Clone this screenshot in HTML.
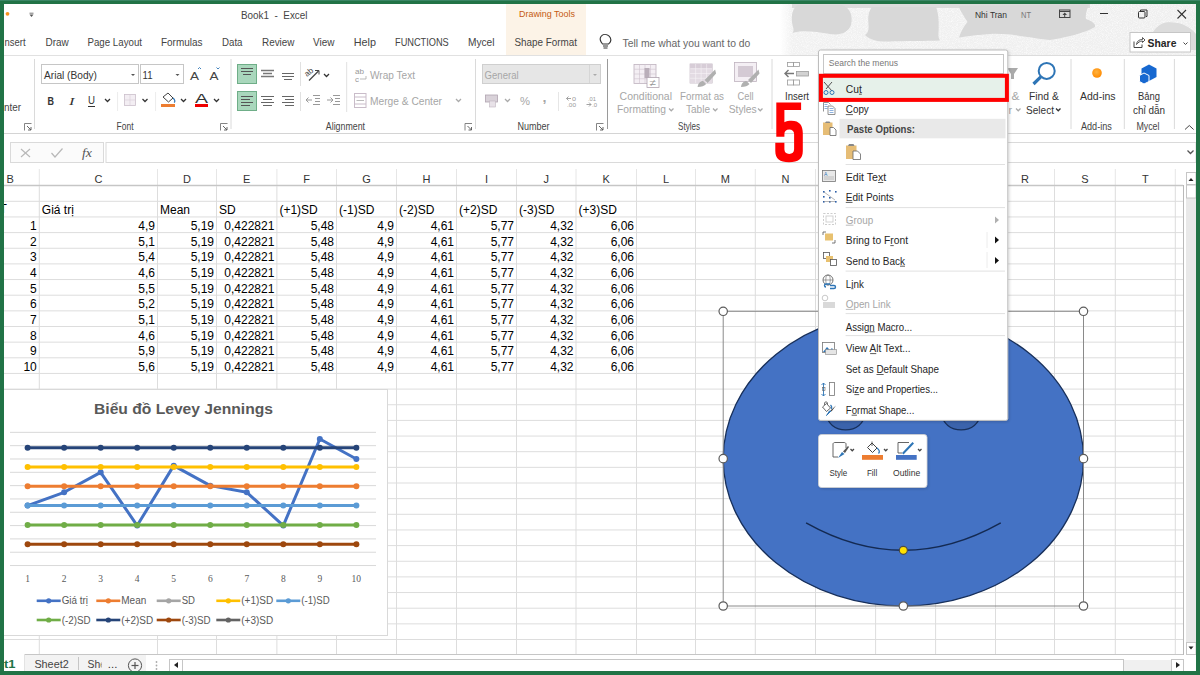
<!DOCTYPE html>
<html><head><meta charset="utf-8"><style>
html,body{margin:0;padding:0;background:#fff;overflow:hidden;width:1200px;height:675px}
svg{display:block;font-family:"Liberation Sans",sans-serif}
</style></head><body>
<svg width="1200" height="675" viewBox="0 0 1200 675">
<rect x="0" y="0" width="1200" height="675" fill="#ffffff"/>
<defs><filter id="noise" x="0" y="0" width="100%" height="100%"><feTurbulence type="fractalNoise" baseFrequency="1.2" numOctaves="1" seed="5" result="t"/><feColorMatrix in="t" values="0 0 0 0 1  0 0 0 0 1  0 0 0 0 1  0 0 0 -2.2 1.25"/></filter><filter id="sh" x="-10%" y="-10%" width="130%" height="130%"><feGaussianBlur in="SourceAlpha" stdDeviation="1.5"/><feOffset dx="0.5" dy="1"/><feComponentTransfer><feFuncA type="linear" slope="0.18"/></feComponentTransfer><feMerge><feMergeNode/><feMergeNode in="SourceGraphic"/></feMerge></filter></defs>
<defs><linearGradient id="bandg" x1="0" y1="0" x2="1" y2="0"><stop offset="0" stop-color="#fff"/><stop offset="0.03" stop-color="#f1f1f1"/><stop offset="1" stop-color="#efefef"/></linearGradient><filter id="soft"><feGaussianBlur stdDeviation="0.7"/></filter></defs>
<rect x="780" y="4" width="416" height="51" fill="url(#bandg)"/>
<rect x="780" y="4" width="416" height="51" fill="#fff" filter="url(#noise)" opacity="0.9"/>
<g filter="url(#soft)">
<rect x="792" y="4" width="298" height="4" fill="#dcdcdc"/>
<path d="M792.5,33 C800,30 815,31 830,34 C840,35.5 848,33 851,25 C853,17 851,8 842,5 L798,5 C793,8 791,14 792,22 C792.5,27 795,30 792.5,33 Z" fill="#d8d8d8"/>
<path d="M865,35 C868,33 869,30 868.5,24 C868,18 868,12 872,7 L936,7 C939,14 939,25 938.5,33 C938,38 940,40 940,40.5 C925,41 905,41 890,41.5 C878,42 870,40 865,35 Z" fill="#d8d8d8"/>
<path d="M959,37.5 C961,31 964,26 967.5,21.9 C964,16 960,11 958.8,6 L1088.8,4.4 C1087,10 1085,15 1086,19 C1092,21 1096,24 1095,27 C1088,31 1075,36 1050,40 C1030,38 1010,33 990,34 C978,35 968,36 959,37.5 Z" fill="#d8d8d8"/>
<path d="M1149,50 C1148,36 1156,24 1166,22.5 C1178,21 1190,26 1196,34 L1196,50 Z" fill="#dcdcdc"/>
</g>
<circle cx="7.5" cy="13.8" r="1.9" fill="#f7931e"/>
<line x1="29.5" y1="13.2" x2="33.5" y2="13.2" stroke="#555" stroke-width="0.8"/>
<path d="M29.5,14.6 L33.5,14.6 L31.5,17 Z" fill="#555"/>
<text x="241" y="19" font-size="10.5" fill="#444" textLength="66.5" lengthAdjust="spacingAndGlyphs">Book1  -  Excel</text>
<rect x="506" y="4" width="80" height="51" fill="#fcf3e7"/>
<text x="519" y="16.5" font-size="9" fill="#c55a11" textLength="56" lengthAdjust="spacingAndGlyphs">Drawing Tools</text>
<text x="975" y="18" font-size="9" fill="#333" textLength="32" lengthAdjust="spacingAndGlyphs">Nhi Tran</text>
<text x="1021" y="18" font-size="9" fill="#777" textLength="10" lengthAdjust="spacingAndGlyphs">NT</text>
<rect x="1059.5" y="10" width="10.5" height="7.5" fill="none" stroke="#444" stroke-width="1"/>
<line x1="1059.5" y1="11.5" x2="1070" y2="11.5" stroke="#444" stroke-width="1"/>
<path d="M1064.7,12.5 L1062.5,15 L1067,15 Z" fill="#444"/>
<line x1="1064.7" y1="14" x2="1064.7" y2="17.5" stroke="#444" stroke-width="1"/>
<line x1="1100" y1="13.5" x2="1108" y2="13.5" stroke="#333" stroke-width="1"/>
<rect x="1138.5" y="11.5" width="6.5" height="6.5" fill="none" stroke="#333" stroke-width="1" rx="1"/>
<path d="M1140.5,11 L1140.5,10 L1147,10 L1147,16.5 L1146,16.5" fill="none" stroke="#333" stroke-width="1"/>
<line x1="1177.5" y1="10" x2="1186" y2="18.5" stroke="#333" stroke-width="1.1"/>
<line x1="1186" y1="10" x2="1177.5" y2="18.5" stroke="#333" stroke-width="1.1"/>
<text x="4.5" y="46.3" font-size="10.5" fill="#444" textLength="21.0" lengthAdjust="spacingAndGlyphs">nsert</text>
<text x="45.5" y="46.3" font-size="10.5" fill="#444" textLength="23.25" lengthAdjust="spacingAndGlyphs">Draw</text>
<text x="87.5" y="46.3" font-size="10.5" fill="#444" textLength="54.5" lengthAdjust="spacingAndGlyphs">Page Layout</text>
<text x="161" y="46.3" font-size="10.5" fill="#444" textLength="41.5" lengthAdjust="spacingAndGlyphs">Formulas</text>
<text x="222" y="46.3" font-size="10.5" fill="#444" textLength="20.5" lengthAdjust="spacingAndGlyphs">Data</text>
<text x="262" y="46.3" font-size="10.5" fill="#444" textLength="32.5" lengthAdjust="spacingAndGlyphs">Review</text>
<text x="313" y="46.3" font-size="10.5" fill="#444" textLength="21.5" lengthAdjust="spacingAndGlyphs">View</text>
<text x="353.75" y="46.3" font-size="10.5" fill="#444" textLength="22.25" lengthAdjust="spacingAndGlyphs">Help</text>
<text x="395" y="46.3" font-size="10.5" fill="#444" textLength="53.75" lengthAdjust="spacingAndGlyphs">FUNCTIONS</text>
<text x="468" y="46.3" font-size="10.5" fill="#444" textLength="26.5" lengthAdjust="spacingAndGlyphs">Mycel</text>
<text x="514.5" y="46.3" font-size="10.5" fill="#444" textLength="62.5" lengthAdjust="spacingAndGlyphs">Shape Format</text>
<path d="M602.5,44 C600,41 599.5,38.5 601,36.5 C602.5,34.5 605.5,34 607.5,35 C610,36 611.5,39 610.5,41.5 C610,42.8 609,43.5 608.5,44 Z" fill="none" stroke="#333" stroke-width="1.1"/>
<line x1="603" y1="46" x2="608" y2="46" stroke="#333" stroke-width="1"/>
<line x1="603.5" y1="48" x2="607.5" y2="48" stroke="#333" stroke-width="1"/>
<text x="622.6" y="46.8" font-size="10.5" fill="#666" textLength="127.7" lengthAdjust="spacingAndGlyphs">Tell me what you want to do</text>
<rect x="1130" y="32.5" width="60.5" height="19.5" fill="#fff" stroke="#c6c6c6" stroke-width="1"/>
<path d="M1134,41.5 L1134,47.5 L1142,47.5 L1142,44.5" fill="none" stroke="#444" stroke-width="1"/>
<path d="M1136.5,44.5 C1137,41 1139,39.5 1142.5,39.5 L1142.5,37.5 L1145,40 L1142.5,42.5 L1142.5,41 C1140,41 1138,42.5 1136.5,44.5 Z" fill="none" stroke="#444" stroke-width="0.9"/>
<text x="1147.6" y="47" font-size="11" fill="#262626" font-weight="bold" textLength="28.8" lengthAdjust="spacingAndGlyphs">Share</text>
<path d="M1183.5,42.5 L1185.5,44.5 L1187.5,42.5" fill="none" stroke="#444" stroke-width="1"/>
<line x1="4" y1="55.5" x2="790" y2="55.5" stroke="#e1e1e1" stroke-width="1"/>
<line x1="790" y1="55.5" x2="1196" y2="55.5" stroke="#dcdcdc" stroke-width="1"/>
<line x1="4" y1="133.5" x2="1196" y2="133.5" stroke="#d4d4d4" stroke-width="1"/>
<text x="4" y="111" font-size="10.5" fill="#444" textLength="17" lengthAdjust="spacingAndGlyphs">nter</text>
<path d="M24.5,130.5 L24.5,123.5 L31.5,123.5" fill="none" stroke="#777" stroke-width="0.9"/>
<path d="M27.0,126.0 L31.0,130.0 M31.0,127.0 L31.0,130.0 L28.0,130.0" fill="none" stroke="#555" stroke-width="0.9"/>
<line x1="34.5" y1="59" x2="34.5" y2="129" stroke="#dadada" stroke-width="1"/>
<rect x="41.5" y="64.5" width="97" height="19" fill="#fff" stroke="#c6c6c6" stroke-width="1"/>
<text x="44" y="78.5" font-size="10.5" fill="#333" textLength="53" lengthAdjust="spacingAndGlyphs">Arial (Body)</text>
<path d="M131,74 L133,76 L135,74 Z" fill="#555"/>
<rect x="140.5" y="64.5" width="43" height="19" fill="#fff" stroke="#c6c6c6" stroke-width="1"/>
<text x="142.5" y="78.5" font-size="10.5" fill="#333" textLength="10" lengthAdjust="spacingAndGlyphs">11</text>
<path d="M175.5,74 L177.5,76 L179.5,74 Z" fill="#555"/>
<text x="190" y="80" font-size="11" fill="#444" textLength="9" lengthAdjust="spacingAndGlyphs">A</text>
<path d="M198,69 L199.5,67.5 L201,69" fill="none" stroke="#2e75b6" stroke-width="0.9"/>
<text x="209.5" y="80" font-size="11" fill="#444" textLength="9" lengthAdjust="spacingAndGlyphs">A</text>
<path d="M216.5,67.5 L218,69 L219.5,67.5" fill="none" stroke="#2e75b6" stroke-width="0.9"/>
<text x="47.5" y="105" font-size="11" fill="#333" font-weight="bold" textLength="6.5" lengthAdjust="spacingAndGlyphs">B</text>
<text x="69" y="105" font-size="11" fill="#333" font-family="Liberation Serif" font-style="italic" textLength="5.5" lengthAdjust="spacingAndGlyphs">I</text>
<text x="88" y="104" font-size="10.5" fill="#333" textLength="7" lengthAdjust="spacingAndGlyphs">U</text>
<line x1="88" y1="106.5" x2="95" y2="106.5" stroke="#333" stroke-width="1"/>
<path d="M105,99 L107.5,101.5 L110,99" fill="none" stroke="#333" stroke-width="1.25"/>
<line x1="117.6" y1="92" x2="117.6" y2="111" stroke="#ececec" stroke-width="1"/>
<rect x="124.5" y="94.5" width="11" height="11" fill="#f3eef3" stroke="#cbbfcb" stroke-width="0.8"/>
<line x1="130" y1="94.5" x2="130" y2="105.5" stroke="#d8cfd8" stroke-width="0.6"/>
<line x1="124.5" y1="100" x2="135.5" y2="100" stroke="#d8cfd8" stroke-width="0.6"/>
<path d="M142.5,99 L145.0,101.5 L147.5,99" fill="none" stroke="#333" stroke-width="1.25"/>
<line x1="155.6" y1="92" x2="155.6" y2="111" stroke="#ececec" stroke-width="1"/>
<path d="M163,97 L168,93 L173,98 L168.5,102 Z" fill="none" stroke="#444" stroke-width="1"/>
<path d="M173,98 C175,100 175.5,101.5 174,102.5" fill="none" stroke="#2e75b6" stroke-width="1.2"/>
<rect x="161" y="104" width="14" height="3" fill="#ed7d31"/>
<path d="M181,99 L183.5,101.5 L186,99" fill="none" stroke="#333" stroke-width="1.25"/>
<text x="195" y="103" font-size="12" fill="#333" textLength="13" lengthAdjust="spacingAndGlyphs">A</text>
<rect x="195" y="104" width="13" height="3" fill="#f00000"/>
<path d="M214,99 L216.5,101.5 L219,99" fill="none" stroke="#333" stroke-width="1.25"/>
<text x="116.6" y="130" font-size="10.5" fill="#444" textLength="17" lengthAdjust="spacingAndGlyphs">Font</text>
<path d="M220.5,130.5 L220.5,123.5 L227.5,123.5" fill="none" stroke="#777" stroke-width="0.9"/>
<path d="M223.0,126.0 L227.0,130.0 M227.0,127.0 L227.0,130.0 L224.0,130.0" fill="none" stroke="#555" stroke-width="0.9"/>
<line x1="231" y1="59" x2="231" y2="129" stroke="#dadada" stroke-width="1"/>
<rect x="237.5" y="64.5" width="19" height="19" fill="#a9d7bc" stroke="#6fae88" stroke-width="1"/>
<line x1="241" y1="68.5" x2="253" y2="68.5" stroke="#555" stroke-width="1"/>
<line x1="241" y1="71.5" x2="253" y2="71.5" stroke="#555" stroke-width="1"/>
<line x1="243" y1="74.5" x2="251" y2="74.5" stroke="#555" stroke-width="1"/>
<line x1="261" y1="70.5" x2="274" y2="70.5" stroke="#777" stroke-width="1.5"/>
<line x1="263" y1="73.5" x2="272" y2="73.5" stroke="#777" stroke-width="1.5"/>
<line x1="261" y1="76.5" x2="274" y2="76.5" stroke="#777" stroke-width="1.5"/>
<line x1="282" y1="73.5" x2="294" y2="73.5" stroke="#666" stroke-width="1"/>
<line x1="282" y1="76.5" x2="294" y2="76.5" stroke="#666" stroke-width="1"/>
<line x1="284" y1="79.5" x2="292" y2="79.5" stroke="#666" stroke-width="1"/>
<line x1="300.5" y1="62" x2="300.5" y2="86" stroke="#e1e1e1" stroke-width="1"/>
<text x="0" y="0" font-size="8" fill="#444" transform="translate(307,77) rotate(-40)">ab</text>
<line x1="309" y1="80.5" x2="318.5" y2="71" stroke="#444" stroke-width="1.2"/>
<path d="M315,70.5 L319,70.5 L319,74.5" fill="none" stroke="#444" stroke-width="1"/>
<path d="M324,74 L326.5,76.5 L329,74" fill="none" stroke="#333" stroke-width="1.25"/>
<line x1="346.7" y1="62" x2="346.7" y2="112" stroke="#e1e1e1" stroke-width="1"/>
<text x="355" y="74" font-size="7" fill="#999" textLength="9" lengthAdjust="spacingAndGlyphs">ab</text>
<text x="355" y="82" font-size="7" fill="#999" textLength="4" lengthAdjust="spacingAndGlyphs">c</text>
<path d="M360,79 L366,79 L366,76" fill="none" stroke="#aaa" stroke-width="0.8"/>
<text x="370" y="78.8" font-size="10.5" fill="#a6a6a6" textLength="45" lengthAdjust="spacingAndGlyphs">Wrap Text</text>
<rect x="237.5" y="91.5" width="19" height="19" fill="#a9d7bc" stroke="#6fae88" stroke-width="1"/>
<line x1="241" y1="96.5" x2="253" y2="96.5" stroke="#555" stroke-width="1"/>
<line x1="241" y1="99.5" x2="250" y2="99.5" stroke="#555" stroke-width="1"/>
<line x1="241" y1="102.5" x2="253" y2="102.5" stroke="#555" stroke-width="1"/>
<line x1="241" y1="105.5" x2="250" y2="105.5" stroke="#555" stroke-width="1"/>
<line x1="261" y1="96.5" x2="274" y2="96.5" stroke="#666" stroke-width="1"/>
<line x1="263" y1="99.5" x2="272" y2="99.5" stroke="#666" stroke-width="1"/>
<line x1="261" y1="102.5" x2="274" y2="102.5" stroke="#666" stroke-width="1"/>
<line x1="263" y1="105.5" x2="272" y2="105.5" stroke="#666" stroke-width="1"/>
<line x1="282" y1="96.5" x2="294" y2="96.5" stroke="#666" stroke-width="1"/>
<line x1="285" y1="99.5" x2="294" y2="99.5" stroke="#666" stroke-width="1"/>
<line x1="282" y1="102.5" x2="294" y2="102.5" stroke="#666" stroke-width="1"/>
<line x1="285" y1="105.5" x2="294" y2="105.5" stroke="#666" stroke-width="1"/>
<line x1="300.5" y1="92" x2="300.5" y2="111" stroke="#e1e1e1" stroke-width="1"/>
<line x1="313" y1="95.5" x2="320" y2="95.5" stroke="#999" stroke-width="1"/>
<line x1="315" y1="98.5" x2="320" y2="98.5" stroke="#999" stroke-width="1"/>
<line x1="315" y1="101.5" x2="320" y2="101.5" stroke="#999" stroke-width="1"/>
<line x1="313" y1="104.5" x2="320" y2="104.5" stroke="#999" stroke-width="1"/>
<path d="M306,100 L312,100 M308.5,97.5 L306,100 L308.5,102.5" fill="none" stroke="#999" stroke-width="1"/>
<line x1="333" y1="95.5" x2="340" y2="95.5" stroke="#999" stroke-width="1"/>
<line x1="335" y1="98.5" x2="340" y2="98.5" stroke="#999" stroke-width="1"/>
<line x1="335" y1="101.5" x2="340" y2="101.5" stroke="#999" stroke-width="1"/>
<line x1="333" y1="104.5" x2="340" y2="104.5" stroke="#999" stroke-width="1"/>
<path d="M327,100 L333,100 M330.5,97.5 L333,100 L330.5,102.5" fill="none" stroke="#999" stroke-width="1"/>
<rect x="354.5" y="93.5" width="11.5" height="14" fill="none" stroke="#c9bcc9" stroke-width="1"/>
<line x1="354.5" y1="97" x2="366" y2="97" stroke="#c9bcc9" stroke-width="1"/>
<line x1="354.5" y1="104" x2="366" y2="104" stroke="#c9bcc9" stroke-width="1"/>
<path d="M356.5,100.5 L364,100.5" fill="none" stroke="#aaa" stroke-width="0.8"/>
<text x="370" y="104.8" font-size="10.5" fill="#a6a6a6" textLength="72" lengthAdjust="spacingAndGlyphs">Merge &amp; Center</text>
<path d="M456,99 L458.5,101.5 L461,99" fill="none" stroke="#aaa" stroke-width="1.25"/>
<text x="325.8" y="130" font-size="10.5" fill="#444" textLength="39.2" lengthAdjust="spacingAndGlyphs">Alignment</text>
<path d="M465,130.5 L465,123.5 L472,123.5" fill="none" stroke="#777" stroke-width="0.9"/>
<path d="M467.5,126.0 L471.5,130.0 M471.5,127.0 L471.5,130.0 L468.5,130.0" fill="none" stroke="#555" stroke-width="0.9"/>
<line x1="475.5" y1="59" x2="475.5" y2="129" stroke="#dadada" stroke-width="1"/>
<rect x="482.5" y="64.5" width="118" height="19" fill="#e6e6e6" stroke="#cfcfcf" stroke-width="1"/>
<line x1="589.5" y1="65" x2="589.5" y2="83" stroke="#d6d6d6" stroke-width="1"/>
<text x="484.6" y="78.5" font-size="10.5" fill="#a6a6a6" textLength="34" lengthAdjust="spacingAndGlyphs">General</text>
<path d="M593,74 L595,76 L597,74 Z" fill="#aaa"/>
<rect x="485.5" y="95" width="12" height="7" fill="#d9d2d9" stroke="#b0a4b0" stroke-width="0.8"/>
<rect x="489.5" y="101" width="6" height="6" fill="#e8e2e8" stroke="#c0b6c0" stroke-width="0.6"/>
<path d="M505,99 L507.5,101.5 L510,99" fill="none" stroke="#aaa" stroke-width="1.25"/>
<text x="520" y="105" font-size="11" fill="#a6a6a6" textLength="10" lengthAdjust="spacingAndGlyphs">%</text>
<text x="542.5" y="101.5" font-size="13" fill="#a6a6a6" font-weight="bold" textLength="4" lengthAdjust="spacingAndGlyphs">,</text>
<line x1="558.5" y1="92" x2="558.5" y2="111" stroke="#e6e6e6" stroke-width="1"/>
<path d="M566.5,98.5 L571,98.5 M568.5,96.5 L566.5,98.5 L568.5,100.5" fill="none" stroke="#999" stroke-width="0.9"/>
<text x="572" y="101" font-size="6" fill="#999" textLength="4" lengthAdjust="spacingAndGlyphs">0</text>
<text x="567" y="107" font-size="6" fill="#999" textLength="9" lengthAdjust="spacingAndGlyphs">.00</text>
<text x="588" y="101" font-size="6" fill="#999" textLength="8" lengthAdjust="spacingAndGlyphs">.01</text>
<path d="M586.5,104.5 L591,104.5 M589,102.5 L591,104.5 L589,106.5" fill="none" stroke="#999" stroke-width="0.9"/>
<text x="592" y="107" font-size="6" fill="#999" textLength="5" lengthAdjust="spacingAndGlyphs">.0</text>
<text x="517.5" y="130" font-size="10.5" fill="#444" textLength="32.1" lengthAdjust="spacingAndGlyphs">Number</text>
<path d="M596.5,130.5 L596.5,123.5 L603.5,123.5" fill="none" stroke="#777" stroke-width="0.9"/>
<path d="M599.0,126.0 L603.0,130.0 M603.0,127.0 L603.0,130.0 L600.0,130.0" fill="none" stroke="#555" stroke-width="0.9"/>
<line x1="607.5" y1="59" x2="607.5" y2="129" stroke="#9a9a9a" stroke-width="1"/>
<rect x="634.0" y="64.5" width="22" height="19" fill="#f4eff4" stroke="#bfb2bf" stroke-width="0.8"/>
<line x1="634.0" y1="69.25" x2="656.0" y2="69.25" stroke="#cfc3cf" stroke-width="0.6"/>
<line x1="634.0" y1="74.0" x2="656.0" y2="74.0" stroke="#cfc3cf" stroke-width="0.6"/>
<line x1="634.0" y1="78.75" x2="656.0" y2="78.75" stroke="#cfc3cf" stroke-width="0.6"/>
<line x1="639.5" y1="64.5" x2="639.5" y2="83.5" stroke="#cfc3cf" stroke-width="0.6"/>
<line x1="645.0" y1="64.5" x2="645.0" y2="83.5" stroke="#cfc3cf" stroke-width="0.6"/>
<line x1="650.5" y1="64.5" x2="650.5" y2="83.5" stroke="#cfc3cf" stroke-width="0.6"/>
<rect x="644.5" y="68" width="5" height="10" fill="#b9aeb9"/>
<rect x="647.0" y="77.5" width="12" height="10" fill="#fff" stroke="#b0a4b0" stroke-width="0.8"/>
<text x="649.8" y="86.2" font-size="9" fill="#999" textLength="6.5" lengthAdjust="spacingAndGlyphs">≠</text>
<text x="619.6" y="100.3" font-size="10.5" fill="#a6a6a6" textLength="52.4" lengthAdjust="spacingAndGlyphs">Conditional</text>
<text x="617" y="113.2" font-size="10.5" fill="#a6a6a6" textLength="49" lengthAdjust="spacingAndGlyphs">Formatting</text>
<path d="M669,108.5 L671.25,110.75 L673.5,108.5" fill="none" stroke="#aaa" stroke-width="1.25"/>
<rect x="690.1" y="64.0" width="22" height="19" fill="#f4eff4" stroke="#bfb2bf" stroke-width="0.8"/>
<rect x="690.1" y="64.0" width="22" height="4.5" fill="#d7cdd7"/>
<line x1="690.1" y1="68.75" x2="712.1" y2="68.75" stroke="#cfc3cf" stroke-width="0.6"/>
<line x1="690.1" y1="73.5" x2="712.1" y2="73.5" stroke="#cfc3cf" stroke-width="0.6"/>
<line x1="690.1" y1="78.25" x2="712.1" y2="78.25" stroke="#cfc3cf" stroke-width="0.6"/>
<line x1="695.6" y1="64.0" x2="695.6" y2="83.0" stroke="#cfc3cf" stroke-width="0.6"/>
<line x1="701.1" y1="64.0" x2="701.1" y2="83.0" stroke="#cfc3cf" stroke-width="0.6"/>
<line x1="706.6" y1="64.0" x2="706.6" y2="83.0" stroke="#cfc3cf" stroke-width="0.6"/>
<rect x="690.1" y="68.5" width="22" height="14.5" fill="#e3dbe3"/>
<line x1="690.1" y1="68.75" x2="712.1" y2="68.75" stroke="#f7f3f7" stroke-width="0.6"/>
<line x1="690.1" y1="73.5" x2="712.1" y2="73.5" stroke="#f7f3f7" stroke-width="0.6"/>
<line x1="690.1" y1="78.25" x2="712.1" y2="78.25" stroke="#f7f3f7" stroke-width="0.6"/>
<line x1="695.6" y1="64.0" x2="695.6" y2="83.0" stroke="#f7f3f7" stroke-width="0.6"/>
<line x1="701.1" y1="64.0" x2="701.1" y2="83.0" stroke="#f7f3f7" stroke-width="0.6"/>
<line x1="706.6" y1="64.0" x2="706.6" y2="83.0" stroke="#f7f3f7" stroke-width="0.6"/>
<path d="M697.6,87.0 C698.1,83.5 700.1,81.0 703.1,81.0 L706.1,84.0 C704.6,86.0 701.6,87.0 697.6,87.0 Z M704.6,80.0 L715.1,69.5 L716.1,73.5 L707.6,83.0 Z" fill="#b0b0b0"/>
<text x="680" y="99.8" font-size="10.5" fill="#a6a6a6" textLength="44" lengthAdjust="spacingAndGlyphs">Format as</text>
<text x="686" y="113" font-size="10.5" fill="#a6a6a6" textLength="24" lengthAdjust="spacingAndGlyphs">Table</text>
<path d="M713,108.5 L715.25,110.75 L717.5,108.5" fill="none" stroke="#aaa" stroke-width="1.25"/>
<rect x="734.5" y="62.5" width="22" height="19" fill="#f4eff4" stroke="#bfb2bf" stroke-width="0.8"/>
<rect x="738" y="66" width="15" height="11" fill="#d4cad4"/>
<path d="M741,87 C741.5,83.5 743.5,81 746.5,81 L749.5,84 C748,86 745,87 741,87 Z M748,80 L758.5,69.5 L759.5,73.5 L751,83 Z" fill="#b0b0b0"/>
<text x="737.6" y="99.8" font-size="10.5" fill="#a6a6a6" textLength="16" lengthAdjust="spacingAndGlyphs">Cell</text>
<text x="728.7" y="113" font-size="10.5" fill="#a6a6a6" textLength="28" lengthAdjust="spacingAndGlyphs">Styles</text>
<path d="M758,108.5 L760.25,110.75 L762.5,108.5" fill="none" stroke="#aaa" stroke-width="1.25"/>
<text x="678" y="130" font-size="10.5" fill="#444" textLength="22" lengthAdjust="spacingAndGlyphs">Styles</text>
<line x1="772" y1="59" x2="772" y2="129" stroke="#dadada" stroke-width="1"/>
<rect x="787.5" y="62.5" width="6" height="4" fill="none" stroke="#9c9c9c" stroke-width="0.8"/>
<rect x="793.5" y="62.5" width="6" height="4" fill="none" stroke="#9c9c9c" stroke-width="0.8"/>
<rect x="796.5" y="71.5" width="12" height="4.5" fill="#d2d2d2" stroke="#9c9c9c" stroke-width="0.8"/>
<path d="M785,73.5 L794,73.5 M788.5,70 L785,73.5 L788.5,77" fill="none" stroke="#777" stroke-width="1.4"/>
<rect x="787.5" y="80" width="6" height="5" fill="none" stroke="#9c9c9c" stroke-width="0.8"/>
<rect x="793.5" y="80" width="6" height="5" fill="none" stroke="#9c9c9c" stroke-width="0.8"/>
<text x="785" y="99.8" font-size="10.5" fill="#333" textLength="24" lengthAdjust="spacingAndGlyphs">Insert</text>
<path d="M1007,68 L1018,68 L1014,74 L1014,79 L1011,79 L1011,74 Z" fill="#aaa"/>
<text x="1011.5" y="100" font-size="10.5" fill="#a6a6a6" textLength="8" lengthAdjust="spacingAndGlyphs">&amp;</text>
<text x="1008.6" y="114" font-size="10.5" fill="#a6a6a6" textLength="3.6" lengthAdjust="spacingAndGlyphs">r</text>
<path d="M1016,108.5 L1018.25,110.75 L1020.5,108.5" fill="none" stroke="#aaa" stroke-width="1.25"/>
<circle cx="1046.7" cy="70.9" r="8" fill="none" stroke="#2e75b6" stroke-width="2"/>
<line x1="1040.8" y1="76.8" x2="1033.5" y2="84" stroke="#2e75b6" stroke-width="3.2"/>
<text x="1029" y="100" font-size="10.5" fill="#333" textLength="29.8" lengthAdjust="spacingAndGlyphs">Find &amp;</text>
<text x="1026" y="114" font-size="10.5" fill="#333" textLength="28" lengthAdjust="spacingAndGlyphs">Select</text>
<path d="M1056,108.5 L1058.25,110.75 L1060.5,108.5" fill="none" stroke="#333" stroke-width="1.25"/>
<line x1="1071" y1="59" x2="1071" y2="129" stroke="#dadada" stroke-width="1"/>
<defs><radialGradient id="og" cx="0.45" cy="0.4" r="0.6"><stop offset="0" stop-color="#ffb340"/><stop offset="1" stop-color="#ff8a00"/></radialGradient></defs>
<circle cx="1097" cy="73" r="4.8" fill="url(#og)"/>
<text x="1080" y="100" font-size="10.5" fill="#333" textLength="35.6" lengthAdjust="spacingAndGlyphs">Add-ins</text>
<text x="1081" y="130" font-size="10.5" fill="#444" textLength="30.8" lengthAdjust="spacingAndGlyphs">Add-ins</text>
<line x1="1124.3" y1="59" x2="1124.3" y2="129" stroke="#dadada" stroke-width="1"/>
<path d="M1149,64.5 L1156.5,68.5 L1156.5,77 L1149,81 L1141.5,77 L1141.5,68.5 Z" fill="#1768d0"/>
<path d="M1144,73 L1149,75.5 L1149,81.5 L1144,84 L1139.5,81.5 L1139.5,75.5 Z" fill="#1768d0" stroke="#fff" stroke-width="1"/>
<text x="1138" y="100" font-size="10.5" fill="#333" textLength="22" lengthAdjust="spacingAndGlyphs">Bảng</text>
<text x="1133" y="114" font-size="10.5" fill="#333" textLength="32" lengthAdjust="spacingAndGlyphs">chỉ dẫn</text>
<text x="1136.4" y="130" font-size="10.5" fill="#444" textLength="23.1" lengthAdjust="spacingAndGlyphs">Mycel</text>
<line x1="1174.4" y1="59" x2="1174.4" y2="129" stroke="#dadada" stroke-width="1"/>
<path d="M1185,129.5 L1189.3,125.5 L1193.6,129.5" fill="none" stroke="#444" stroke-width="1"/>
<rect x="10.5" y="142.5" width="93" height="20" fill="#fbfbfb" stroke="#dadada" stroke-width="1"/>
<line x1="21" y1="149" x2="30" y2="157" stroke="#b8b8b8" stroke-width="1.2"/>
<line x1="30" y1="149" x2="21" y2="157" stroke="#b8b8b8" stroke-width="1.2"/>
<path d="M51.5,153 L55,157 L62.5,148.5" fill="none" stroke="#b8b8b8" stroke-width="1.2"/>
<text x="82" y="157" font-size="12" fill="#555" font-family="Liberation Serif" font-style="italic" textLength="10" lengthAdjust="spacingAndGlyphs">fx</text>
<rect x="106" y="142.5" width="1090" height="20" fill="#fff" stroke="#dadada" stroke-width="1"/>
<path d="M1187.5,150.5 L1190.5,153.5 L1193.5,150.5" fill="none" stroke="#555" stroke-width="1.3"/>
<line x1="39.3" y1="169" x2="39.3" y2="185" stroke="#e6e6e6" stroke-width="1"/>
<line x1="157.5" y1="169" x2="157.5" y2="185" stroke="#e6e6e6" stroke-width="1"/>
<line x1="216.5" y1="169" x2="216.5" y2="185" stroke="#e6e6e6" stroke-width="1"/>
<line x1="276.9" y1="169" x2="276.9" y2="185" stroke="#e6e6e6" stroke-width="1"/>
<line x1="336.5" y1="169" x2="336.5" y2="185" stroke="#e6e6e6" stroke-width="1"/>
<line x1="396.5" y1="169" x2="396.5" y2="185" stroke="#e6e6e6" stroke-width="1"/>
<line x1="456.5" y1="169" x2="456.5" y2="185" stroke="#e6e6e6" stroke-width="1"/>
<line x1="516.5" y1="169" x2="516.5" y2="185" stroke="#e6e6e6" stroke-width="1"/>
<line x1="576" y1="169" x2="576" y2="185" stroke="#e6e6e6" stroke-width="1"/>
<line x1="636.5" y1="169" x2="636.5" y2="185" stroke="#e6e6e6" stroke-width="1"/>
<line x1="695.5" y1="169" x2="695.5" y2="185" stroke="#e6e6e6" stroke-width="1"/>
<line x1="755.3" y1="169" x2="755.3" y2="185" stroke="#e6e6e6" stroke-width="1"/>
<line x1="815.5" y1="169" x2="815.5" y2="185" stroke="#e6e6e6" stroke-width="1"/>
<line x1="875.6" y1="169" x2="875.6" y2="185" stroke="#e6e6e6" stroke-width="1"/>
<line x1="935.6" y1="169" x2="935.6" y2="185" stroke="#e6e6e6" stroke-width="1"/>
<line x1="995.5" y1="169" x2="995.5" y2="185" stroke="#e6e6e6" stroke-width="1"/>
<line x1="1054.5" y1="169" x2="1054.5" y2="185" stroke="#e6e6e6" stroke-width="1"/>
<line x1="1115.3" y1="169" x2="1115.3" y2="185" stroke="#e6e6e6" stroke-width="1"/>
<line x1="1175.3" y1="169" x2="1175.3" y2="185" stroke="#e6e6e6" stroke-width="1"/>
<line x1="4" y1="185.5" x2="1183" y2="185.5" stroke="#c6c6c6" stroke-width="1.5"/>
<text x="6.5" y="182.5" font-size="11" fill="#333">B</text>
<text x="98.4" y="182.5" font-size="11" fill="#333" text-anchor="middle">C</text>
<text x="187.0" y="182.5" font-size="11" fill="#333" text-anchor="middle">D</text>
<text x="246.7" y="182.5" font-size="11" fill="#333" text-anchor="middle">E</text>
<text x="306.7" y="182.5" font-size="11" fill="#333" text-anchor="middle">F</text>
<text x="366.5" y="182.5" font-size="11" fill="#333" text-anchor="middle">G</text>
<text x="426.5" y="182.5" font-size="11" fill="#333" text-anchor="middle">H</text>
<text x="486.5" y="182.5" font-size="11" fill="#333" text-anchor="middle">I</text>
<text x="546.25" y="182.5" font-size="11" fill="#333" text-anchor="middle">J</text>
<text x="606.25" y="182.5" font-size="11" fill="#333" text-anchor="middle">K</text>
<text x="666.0" y="182.5" font-size="11" fill="#333" text-anchor="middle">L</text>
<text x="725.4" y="182.5" font-size="11" fill="#333" text-anchor="middle">M</text>
<text x="785.4" y="182.5" font-size="11" fill="#333" text-anchor="middle">N</text>
<text x="845.55" y="182.5" font-size="11" fill="#333" text-anchor="middle">O</text>
<text x="905.6" y="182.5" font-size="11" fill="#333" text-anchor="middle">P</text>
<text x="965.55" y="182.5" font-size="11" fill="#333" text-anchor="middle">Q</text>
<text x="1025.0" y="182.5" font-size="11" fill="#333" text-anchor="middle">R</text>
<text x="1084.9" y="182.5" font-size="11" fill="#333" text-anchor="middle">S</text>
<text x="1145.3" y="182.5" font-size="11" fill="#333" text-anchor="middle">T</text>
<path d="M4,201.30H1183 M4,216.95H1183 M4,232.60H1183 M4,248.25H1183 M4,263.90H1183 M4,279.55H1183 M4,295.20H1183 M4,310.85H1183 M4,326.50H1183 M4,342.15H1183 M4,357.80H1183 M4,373.45H1183 M4,389.10H1183 M4,404.75H1183 M4,420.40H1183 M4,436.05H1183 M4,451.70H1183 M4,467.35H1183 M4,483.00H1183 M4,498.65H1183 M4,514.30H1183 M4,529.95H1183 M4,545.60H1183 M4,561.25H1183 M4,576.90H1183 M4,592.55H1183 M4,608.20H1183 M4,623.85H1183 M4,639.50H1183 M39.30,186V654 M157.50,186V654 M216.50,186V654 M276.90,186V654 M336.50,186V654 M396.50,186V654 M456.50,186V654 M516.50,186V654 M576.00,186V654 M636.50,186V654 M695.50,186V654 M755.30,186V654 M815.50,186V654 M875.60,186V654 M935.60,186V654 M995.50,186V654 M1054.50,186V654 M1115.30,186V654 M1175.30,186V654" fill="none" stroke="#dddddd" stroke-width="1"/>
<line x1="1183.5" y1="185" x2="1183.5" y2="655" stroke="#b9b9b9" stroke-width="1"/>
<line x1="4" y1="654.5" x2="1183" y2="654.5" stroke="#c6c6c6" stroke-width="1"/>
<text x="6.8" y="213.3" font-size="12" fill="#000" text-anchor="end">STT</text>
<text x="41.8" y="213.55" font-size="12" fill="#000">Giá trị</text>
<text x="160.0" y="213.55" font-size="12" fill="#000">Mean</text>
<text x="219.0" y="213.55" font-size="12" fill="#000">SD</text>
<text x="279.4" y="213.55" font-size="12" fill="#000">(+1)SD</text>
<text x="339.0" y="213.55" font-size="12" fill="#000">(-1)SD</text>
<text x="399.0" y="213.55" font-size="12" fill="#000">(-2)SD</text>
<text x="459.0" y="213.55" font-size="12" fill="#000">(+2)SD</text>
<text x="519.0" y="213.55" font-size="12" fill="#000">(-3)SD</text>
<text x="578.5" y="213.55" font-size="12" fill="#000">(+3)SD</text>
<text x="36.8" y="230.0" font-size="12" fill="#000" text-anchor="end">1</text>
<text x="155.0" y="230.0" font-size="12" fill="#000" text-anchor="end">4,9</text>
<text x="214.0" y="230.0" font-size="12" fill="#000" text-anchor="end">5,19</text>
<text x="274.4" y="230.0" font-size="12" fill="#000" text-anchor="end">0,422821</text>
<text x="334.0" y="230.0" font-size="12" fill="#000" text-anchor="end">5,48</text>
<text x="394.0" y="230.0" font-size="12" fill="#000" text-anchor="end">4,9</text>
<text x="454.0" y="230.0" font-size="12" fill="#000" text-anchor="end">4,61</text>
<text x="514.0" y="230.0" font-size="12" fill="#000" text-anchor="end">5,77</text>
<text x="573.5" y="230.0" font-size="12" fill="#000" text-anchor="end">4,32</text>
<text x="634.0" y="230.0" font-size="12" fill="#000" text-anchor="end">6,06</text>
<text x="36.8" y="245.65" font-size="12" fill="#000" text-anchor="end">2</text>
<text x="155.0" y="245.65" font-size="12" fill="#000" text-anchor="end">5,1</text>
<text x="214.0" y="245.65" font-size="12" fill="#000" text-anchor="end">5,19</text>
<text x="274.4" y="245.65" font-size="12" fill="#000" text-anchor="end">0,422821</text>
<text x="334.0" y="245.65" font-size="12" fill="#000" text-anchor="end">5,48</text>
<text x="394.0" y="245.65" font-size="12" fill="#000" text-anchor="end">4,9</text>
<text x="454.0" y="245.65" font-size="12" fill="#000" text-anchor="end">4,61</text>
<text x="514.0" y="245.65" font-size="12" fill="#000" text-anchor="end">5,77</text>
<text x="573.5" y="245.65" font-size="12" fill="#000" text-anchor="end">4,32</text>
<text x="634.0" y="245.65" font-size="12" fill="#000" text-anchor="end">6,06</text>
<text x="36.8" y="261.3" font-size="12" fill="#000" text-anchor="end">3</text>
<text x="155.0" y="261.3" font-size="12" fill="#000" text-anchor="end">5,4</text>
<text x="214.0" y="261.3" font-size="12" fill="#000" text-anchor="end">5,19</text>
<text x="274.4" y="261.3" font-size="12" fill="#000" text-anchor="end">0,422821</text>
<text x="334.0" y="261.3" font-size="12" fill="#000" text-anchor="end">5,48</text>
<text x="394.0" y="261.3" font-size="12" fill="#000" text-anchor="end">4,9</text>
<text x="454.0" y="261.3" font-size="12" fill="#000" text-anchor="end">4,61</text>
<text x="514.0" y="261.3" font-size="12" fill="#000" text-anchor="end">5,77</text>
<text x="573.5" y="261.3" font-size="12" fill="#000" text-anchor="end">4,32</text>
<text x="634.0" y="261.3" font-size="12" fill="#000" text-anchor="end">6,06</text>
<text x="36.8" y="276.95" font-size="12" fill="#000" text-anchor="end">4</text>
<text x="155.0" y="276.95" font-size="12" fill="#000" text-anchor="end">4,6</text>
<text x="214.0" y="276.95" font-size="12" fill="#000" text-anchor="end">5,19</text>
<text x="274.4" y="276.95" font-size="12" fill="#000" text-anchor="end">0,422821</text>
<text x="334.0" y="276.95" font-size="12" fill="#000" text-anchor="end">5,48</text>
<text x="394.0" y="276.95" font-size="12" fill="#000" text-anchor="end">4,9</text>
<text x="454.0" y="276.95" font-size="12" fill="#000" text-anchor="end">4,61</text>
<text x="514.0" y="276.95" font-size="12" fill="#000" text-anchor="end">5,77</text>
<text x="573.5" y="276.95" font-size="12" fill="#000" text-anchor="end">4,32</text>
<text x="634.0" y="276.95" font-size="12" fill="#000" text-anchor="end">6,06</text>
<text x="36.8" y="292.6" font-size="12" fill="#000" text-anchor="end">5</text>
<text x="155.0" y="292.6" font-size="12" fill="#000" text-anchor="end">5,5</text>
<text x="214.0" y="292.6" font-size="12" fill="#000" text-anchor="end">5,19</text>
<text x="274.4" y="292.6" font-size="12" fill="#000" text-anchor="end">0,422821</text>
<text x="334.0" y="292.6" font-size="12" fill="#000" text-anchor="end">5,48</text>
<text x="394.0" y="292.6" font-size="12" fill="#000" text-anchor="end">4,9</text>
<text x="454.0" y="292.6" font-size="12" fill="#000" text-anchor="end">4,61</text>
<text x="514.0" y="292.6" font-size="12" fill="#000" text-anchor="end">5,77</text>
<text x="573.5" y="292.6" font-size="12" fill="#000" text-anchor="end">4,32</text>
<text x="634.0" y="292.6" font-size="12" fill="#000" text-anchor="end">6,06</text>
<text x="36.8" y="308.25" font-size="12" fill="#000" text-anchor="end">6</text>
<text x="155.0" y="308.25" font-size="12" fill="#000" text-anchor="end">5,2</text>
<text x="214.0" y="308.25" font-size="12" fill="#000" text-anchor="end">5,19</text>
<text x="274.4" y="308.25" font-size="12" fill="#000" text-anchor="end">0,422821</text>
<text x="334.0" y="308.25" font-size="12" fill="#000" text-anchor="end">5,48</text>
<text x="394.0" y="308.25" font-size="12" fill="#000" text-anchor="end">4,9</text>
<text x="454.0" y="308.25" font-size="12" fill="#000" text-anchor="end">4,61</text>
<text x="514.0" y="308.25" font-size="12" fill="#000" text-anchor="end">5,77</text>
<text x="573.5" y="308.25" font-size="12" fill="#000" text-anchor="end">4,32</text>
<text x="634.0" y="308.25" font-size="12" fill="#000" text-anchor="end">6,06</text>
<text x="36.8" y="323.9" font-size="12" fill="#000" text-anchor="end">7</text>
<text x="155.0" y="323.9" font-size="12" fill="#000" text-anchor="end">5,1</text>
<text x="214.0" y="323.9" font-size="12" fill="#000" text-anchor="end">5,19</text>
<text x="274.4" y="323.9" font-size="12" fill="#000" text-anchor="end">0,422821</text>
<text x="334.0" y="323.9" font-size="12" fill="#000" text-anchor="end">5,48</text>
<text x="394.0" y="323.9" font-size="12" fill="#000" text-anchor="end">4,9</text>
<text x="454.0" y="323.9" font-size="12" fill="#000" text-anchor="end">4,61</text>
<text x="514.0" y="323.9" font-size="12" fill="#000" text-anchor="end">5,77</text>
<text x="573.5" y="323.9" font-size="12" fill="#000" text-anchor="end">4,32</text>
<text x="634.0" y="323.9" font-size="12" fill="#000" text-anchor="end">6,06</text>
<text x="36.8" y="339.55" font-size="12" fill="#000" text-anchor="end">8</text>
<text x="155.0" y="339.55" font-size="12" fill="#000" text-anchor="end">4,6</text>
<text x="214.0" y="339.55" font-size="12" fill="#000" text-anchor="end">5,19</text>
<text x="274.4" y="339.55" font-size="12" fill="#000" text-anchor="end">0,422821</text>
<text x="334.0" y="339.55" font-size="12" fill="#000" text-anchor="end">5,48</text>
<text x="394.0" y="339.55" font-size="12" fill="#000" text-anchor="end">4,9</text>
<text x="454.0" y="339.55" font-size="12" fill="#000" text-anchor="end">4,61</text>
<text x="514.0" y="339.55" font-size="12" fill="#000" text-anchor="end">5,77</text>
<text x="573.5" y="339.55" font-size="12" fill="#000" text-anchor="end">4,32</text>
<text x="634.0" y="339.55" font-size="12" fill="#000" text-anchor="end">6,06</text>
<text x="36.8" y="355.2" font-size="12" fill="#000" text-anchor="end">9</text>
<text x="155.0" y="355.2" font-size="12" fill="#000" text-anchor="end">5,9</text>
<text x="214.0" y="355.2" font-size="12" fill="#000" text-anchor="end">5,19</text>
<text x="274.4" y="355.2" font-size="12" fill="#000" text-anchor="end">0,422821</text>
<text x="334.0" y="355.2" font-size="12" fill="#000" text-anchor="end">5,48</text>
<text x="394.0" y="355.2" font-size="12" fill="#000" text-anchor="end">4,9</text>
<text x="454.0" y="355.2" font-size="12" fill="#000" text-anchor="end">4,61</text>
<text x="514.0" y="355.2" font-size="12" fill="#000" text-anchor="end">5,77</text>
<text x="573.5" y="355.2" font-size="12" fill="#000" text-anchor="end">4,32</text>
<text x="634.0" y="355.2" font-size="12" fill="#000" text-anchor="end">6,06</text>
<text x="36.8" y="370.85" font-size="12" fill="#000" text-anchor="end">10</text>
<text x="155.0" y="370.85" font-size="12" fill="#000" text-anchor="end">5,6</text>
<text x="214.0" y="370.85" font-size="12" fill="#000" text-anchor="end">5,19</text>
<text x="274.4" y="370.85" font-size="12" fill="#000" text-anchor="end">0,422821</text>
<text x="334.0" y="370.85" font-size="12" fill="#000" text-anchor="end">5,48</text>
<text x="394.0" y="370.85" font-size="12" fill="#000" text-anchor="end">4,9</text>
<text x="454.0" y="370.85" font-size="12" fill="#000" text-anchor="end">4,61</text>
<text x="514.0" y="370.85" font-size="12" fill="#000" text-anchor="end">5,77</text>
<text x="573.5" y="370.85" font-size="12" fill="#000" text-anchor="end">4,32</text>
<text x="634.0" y="370.85" font-size="12" fill="#000" text-anchor="end">6,06</text>
<rect x="1186" y="185" width="10" height="469" fill="#e9e9e9"/>
<rect x="1186.5" y="172.5" width="9.5" height="12" fill="#fff" stroke="#c6c6c6" stroke-width="1"/>
<path d="M1188.5,181 L1191,178 L1193.5,181 Z" fill="#222"/>
<rect x="1186.5" y="185" width="9.5" height="13" fill="#fff" stroke="#c6c6c6" stroke-width="1"/>
<rect x="1186.5" y="642.5" width="9.5" height="12" fill="#fff" stroke="#c6c6c6" stroke-width="1"/>
<path d="M1188.5,646.5 L1191,649.5 L1193.5,646.5 Z" fill="#222"/>
<rect x="-1" y="389.5" width="388.5" height="246" fill="#fff" stroke="#d9d9d9" stroke-width="1"/>
<text x="94" y="414" font-size="14" fill="#595959" font-weight="bold" textLength="179" lengthAdjust="spacingAndGlyphs">Biểu đồ Levey Jennings</text>
<path d="M10,432.35H376 M10,445.67H376 M10,458.99H376 M10,472.31H376 M10,485.63H376 M10,498.95H376 M10,512.27H376 M10,525.59H376 M10,538.91H376 M10,552.23H376 M10,565.55H376" fill="none" stroke="#d9d9d9" stroke-width="1"/>
<polyline points="27.60,505.61 64.13,492.29 100.66,472.31 137.19,525.59 173.72,465.65 210.25,485.63 246.78,492.29 283.31,525.59 319.84,439.01 356.37,458.99" fill="none" stroke="#4472c4" stroke-width="3" stroke-linejoin="round"/>
<circle cx="27.6" cy="505.61" r="3" fill="#4472c4"/>
<circle cx="64.13" cy="492.29" r="3" fill="#4472c4"/>
<circle cx="100.66" cy="472.31" r="3" fill="#4472c4"/>
<circle cx="137.19" cy="525.59" r="3" fill="#4472c4"/>
<circle cx="173.72" cy="465.65" r="3" fill="#4472c4"/>
<circle cx="210.25" cy="485.63" r="3" fill="#4472c4"/>
<circle cx="246.78" cy="492.29" r="3" fill="#4472c4"/>
<circle cx="283.31" cy="525.59" r="3" fill="#4472c4"/>
<circle cx="319.84" cy="439.01" r="3" fill="#4472c4"/>
<circle cx="356.37" cy="458.99" r="3" fill="#4472c4"/>
<polyline points="27.60,486.30 64.13,486.30 100.66,486.30 137.19,486.30 173.72,486.30 210.25,486.30 246.78,486.30 283.31,486.30 319.84,486.30 356.37,486.30" fill="none" stroke="#ed7d31" stroke-width="3" stroke-linejoin="round"/>
<circle cx="27.6" cy="486.3" r="3" fill="#ed7d31"/>
<circle cx="64.13" cy="486.3" r="3" fill="#ed7d31"/>
<circle cx="100.66" cy="486.3" r="3" fill="#ed7d31"/>
<circle cx="137.19" cy="486.3" r="3" fill="#ed7d31"/>
<circle cx="173.72" cy="486.3" r="3" fill="#ed7d31"/>
<circle cx="210.25" cy="486.3" r="3" fill="#ed7d31"/>
<circle cx="246.78" cy="486.3" r="3" fill="#ed7d31"/>
<circle cx="283.31" cy="486.3" r="3" fill="#ed7d31"/>
<circle cx="319.84" cy="486.3" r="3" fill="#ed7d31"/>
<circle cx="356.37" cy="486.3" r="3" fill="#ed7d31"/>
<polyline points="27.60,466.99 64.13,466.99 100.66,466.99 137.19,466.99 173.72,466.99 210.25,466.99 246.78,466.99 283.31,466.99 319.84,466.99 356.37,466.99" fill="none" stroke="#ffc000" stroke-width="3" stroke-linejoin="round"/>
<circle cx="27.6" cy="466.99" r="3" fill="#ffc000"/>
<circle cx="64.13" cy="466.99" r="3" fill="#ffc000"/>
<circle cx="100.66" cy="466.99" r="3" fill="#ffc000"/>
<circle cx="137.19" cy="466.99" r="3" fill="#ffc000"/>
<circle cx="173.72" cy="466.99" r="3" fill="#ffc000"/>
<circle cx="210.25" cy="466.99" r="3" fill="#ffc000"/>
<circle cx="246.78" cy="466.99" r="3" fill="#ffc000"/>
<circle cx="283.31" cy="466.99" r="3" fill="#ffc000"/>
<circle cx="319.84" cy="466.99" r="3" fill="#ffc000"/>
<circle cx="356.37" cy="466.99" r="3" fill="#ffc000"/>
<polyline points="27.60,505.61 64.13,505.61 100.66,505.61 137.19,505.61 173.72,505.61 210.25,505.61 246.78,505.61 283.31,505.61 319.84,505.61 356.37,505.61" fill="none" stroke="#5b9bd5" stroke-width="3" stroke-linejoin="round"/>
<circle cx="27.6" cy="505.61" r="3" fill="#5b9bd5"/>
<circle cx="64.13" cy="505.61" r="3" fill="#5b9bd5"/>
<circle cx="100.66" cy="505.61" r="3" fill="#5b9bd5"/>
<circle cx="137.19" cy="505.61" r="3" fill="#5b9bd5"/>
<circle cx="173.72" cy="505.61" r="3" fill="#5b9bd5"/>
<circle cx="210.25" cy="505.61" r="3" fill="#5b9bd5"/>
<circle cx="246.78" cy="505.61" r="3" fill="#5b9bd5"/>
<circle cx="283.31" cy="505.61" r="3" fill="#5b9bd5"/>
<circle cx="319.84" cy="505.61" r="3" fill="#5b9bd5"/>
<circle cx="356.37" cy="505.61" r="3" fill="#5b9bd5"/>
<polyline points="27.60,524.93 64.13,524.93 100.66,524.93 137.19,524.93 173.72,524.93 210.25,524.93 246.78,524.93 283.31,524.93 319.84,524.93 356.37,524.93" fill="none" stroke="#70ad47" stroke-width="3" stroke-linejoin="round"/>
<circle cx="27.6" cy="524.93" r="3" fill="#70ad47"/>
<circle cx="64.13" cy="524.93" r="3" fill="#70ad47"/>
<circle cx="100.66" cy="524.93" r="3" fill="#70ad47"/>
<circle cx="137.19" cy="524.93" r="3" fill="#70ad47"/>
<circle cx="173.72" cy="524.93" r="3" fill="#70ad47"/>
<circle cx="210.25" cy="524.93" r="3" fill="#70ad47"/>
<circle cx="246.78" cy="524.93" r="3" fill="#70ad47"/>
<circle cx="283.31" cy="524.93" r="3" fill="#70ad47"/>
<circle cx="319.84" cy="524.93" r="3" fill="#70ad47"/>
<circle cx="356.37" cy="524.93" r="3" fill="#70ad47"/>
<polyline points="27.60,447.67 64.13,447.67 100.66,447.67 137.19,447.67 173.72,447.67 210.25,447.67 246.78,447.67 283.31,447.67 319.84,447.67 356.37,447.67" fill="none" stroke="#264478" stroke-width="3" stroke-linejoin="round"/>
<circle cx="27.6" cy="447.67" r="3" fill="#264478"/>
<circle cx="64.13" cy="447.67" r="3" fill="#264478"/>
<circle cx="100.66" cy="447.67" r="3" fill="#264478"/>
<circle cx="137.19" cy="447.67" r="3" fill="#264478"/>
<circle cx="173.72" cy="447.67" r="3" fill="#264478"/>
<circle cx="210.25" cy="447.67" r="3" fill="#264478"/>
<circle cx="246.78" cy="447.67" r="3" fill="#264478"/>
<circle cx="283.31" cy="447.67" r="3" fill="#264478"/>
<circle cx="319.84" cy="447.67" r="3" fill="#264478"/>
<circle cx="356.37" cy="447.67" r="3" fill="#264478"/>
<polyline points="27.60,544.24 64.13,544.24 100.66,544.24 137.19,544.24 173.72,544.24 210.25,544.24 246.78,544.24 283.31,544.24 319.84,544.24 356.37,544.24" fill="none" stroke="#9e480e" stroke-width="3" stroke-linejoin="round"/>
<circle cx="27.6" cy="544.24" r="3" fill="#9e480e"/>
<circle cx="64.13" cy="544.24" r="3" fill="#9e480e"/>
<circle cx="100.66" cy="544.24" r="3" fill="#9e480e"/>
<circle cx="137.19" cy="544.24" r="3" fill="#9e480e"/>
<circle cx="173.72" cy="544.24" r="3" fill="#9e480e"/>
<circle cx="210.25" cy="544.24" r="3" fill="#9e480e"/>
<circle cx="246.78" cy="544.24" r="3" fill="#9e480e"/>
<circle cx="283.31" cy="544.24" r="3" fill="#9e480e"/>
<circle cx="319.84" cy="544.24" r="3" fill="#9e480e"/>
<circle cx="356.37" cy="544.24" r="3" fill="#9e480e"/>
<text x="27.6" y="581.7" font-size="9.5" fill="#595959" font-family="Liberation Serif" text-anchor="middle">1</text>
<text x="64.13" y="581.7" font-size="9.5" fill="#595959" font-family="Liberation Serif" text-anchor="middle">2</text>
<text x="100.66" y="581.7" font-size="9.5" fill="#595959" font-family="Liberation Serif" text-anchor="middle">3</text>
<text x="137.19" y="581.7" font-size="9.5" fill="#595959" font-family="Liberation Serif" text-anchor="middle">4</text>
<text x="173.72" y="581.7" font-size="9.5" fill="#595959" font-family="Liberation Serif" text-anchor="middle">5</text>
<text x="210.25" y="581.7" font-size="9.5" fill="#595959" font-family="Liberation Serif" text-anchor="middle">6</text>
<text x="246.78" y="581.7" font-size="9.5" fill="#595959" font-family="Liberation Serif" text-anchor="middle">7</text>
<text x="283.31" y="581.7" font-size="9.5" fill="#595959" font-family="Liberation Serif" text-anchor="middle">8</text>
<text x="319.84" y="581.7" font-size="9.5" fill="#595959" font-family="Liberation Serif" text-anchor="middle">9</text>
<text x="356.37" y="581.7" font-size="9.5" fill="#595959" font-family="Liberation Serif" text-anchor="middle">10</text>
<line x1="36.7" y1="600.8" x2="60.7" y2="600.8" stroke="#4472c4" stroke-width="2.6"/>
<circle cx="48.7" cy="600.8" r="2.6" fill="#4472c4"/>
<text x="61.7" y="604.4" font-size="10" fill="#595959" textLength="26.3" lengthAdjust="spacingAndGlyphs">Giá trị</text>
<line x1="96.3" y1="600.8" x2="120.3" y2="600.8" stroke="#ed7d31" stroke-width="2.6"/>
<circle cx="108.3" cy="600.8" r="2.6" fill="#ed7d31"/>
<text x="121.3" y="604.4" font-size="10" fill="#595959" textLength="25" lengthAdjust="spacingAndGlyphs">Mean</text>
<line x1="156.7" y1="600.8" x2="180.7" y2="600.8" stroke="#a5a5a5" stroke-width="2.6"/>
<circle cx="168.7" cy="600.8" r="2.6" fill="#a5a5a5"/>
<text x="181.7" y="604.4" font-size="10" fill="#595959" textLength="13.3" lengthAdjust="spacingAndGlyphs">SD</text>
<line x1="216.3" y1="600.8" x2="240.3" y2="600.8" stroke="#ffc000" stroke-width="2.6"/>
<circle cx="228.3" cy="600.8" r="2.6" fill="#ffc000"/>
<text x="241.3" y="604.4" font-size="10" fill="#595959" textLength="31.9" lengthAdjust="spacingAndGlyphs">(+1)SD</text>
<line x1="276.3" y1="600.8" x2="300.3" y2="600.8" stroke="#5b9bd5" stroke-width="2.6"/>
<circle cx="288.3" cy="600.8" r="2.6" fill="#5b9bd5"/>
<text x="301.3" y="604.4" font-size="10" fill="#595959" textLength="28.3" lengthAdjust="spacingAndGlyphs">(-1)SD</text>
<line x1="36.7" y1="620" x2="60.7" y2="620" stroke="#70ad47" stroke-width="2.6"/>
<circle cx="48.7" cy="620" r="2.6" fill="#70ad47"/>
<text x="61.7" y="623.6" font-size="10" fill="#595959" textLength="28.8" lengthAdjust="spacingAndGlyphs">(-2)SD</text>
<line x1="96.3" y1="620" x2="120.3" y2="620" stroke="#264478" stroke-width="2.6"/>
<circle cx="108.3" cy="620" r="2.6" fill="#264478"/>
<text x="121.3" y="623.6" font-size="10" fill="#595959" textLength="31.8" lengthAdjust="spacingAndGlyphs">(+2)SD</text>
<line x1="156.7" y1="620" x2="180.7" y2="620" stroke="#9e480e" stroke-width="2.6"/>
<circle cx="168.7" cy="620" r="2.6" fill="#9e480e"/>
<text x="181.7" y="623.6" font-size="10" fill="#595959" textLength="28.8" lengthAdjust="spacingAndGlyphs">(-3)SD</text>
<line x1="216.3" y1="620" x2="240.3" y2="620" stroke="#636363" stroke-width="2.6"/>
<circle cx="228.3" cy="620" r="2.6" fill="#636363"/>
<text x="241.3" y="623.6" font-size="10" fill="#595959" textLength="31.9" lengthAdjust="spacingAndGlyphs">(+3)SD</text>
<rect x="4" y="655" width="1192" height="16" fill="#fff"/>
<rect x="24.5" y="654.5" width="122" height="17" fill="#f3f3f3" stroke="#c6c6c6" stroke-width="1"/>
<rect x="4" y="654" width="20.5" height="17" fill="#fff"/>
<text x="4" y="667.7" font-size="11" fill="#217346" font-weight="bold" textLength="11.5" lengthAdjust="spacingAndGlyphs">t1</text>
<text x="34.4" y="667.7" font-size="11" fill="#444" textLength="34.3" lengthAdjust="spacingAndGlyphs">Sheet2</text>
<line x1="78.5" y1="657" x2="78.5" y2="670" stroke="#c6c6c6" stroke-width="1"/>
<clipPath id="shc"><rect x="80" y="655" width="21.5" height="16"/></clipPath>
<text x="87.5" y="667.7" font-size="11" fill="#444" textLength="18.5" lengthAdjust="spacingAndGlyphs" clip-path="url(#shc)">She</text>
<text x="107.8" y="667.7" font-size="11" fill="#333" textLength="9.5" lengthAdjust="spacingAndGlyphs">...</text>
<rect x="146" y="655" width="22" height="16" fill="#fff"/>
<circle cx="135" cy="665.5" r="6.6" fill="none" stroke="#555" stroke-width="1"/>
<line x1="131.5" y1="665.5" x2="138.5" y2="665.5" stroke="#555" stroke-width="1.2"/>
<line x1="135" y1="662" x2="135" y2="669" stroke="#555" stroke-width="1.2"/>
<circle cx="156.5" cy="662" r="0.9" fill="#aaa"/>
<circle cx="156.5" cy="665.5" r="0.9" fill="#aaa"/>
<circle cx="156.5" cy="669" r="0.9" fill="#aaa"/>
<rect x="169.5" y="659.5" width="13" height="12" fill="#fff" stroke="#c6c6c6" stroke-width="1"/>
<path d="M178,662 L174,665 L178,668 Z" fill="#222"/>
<rect x="182.5" y="659.5" width="941" height="12" fill="#fff" stroke="#c6c6c6" stroke-width="1"/>
<rect x="1124" y="660" width="47.5" height="11" fill="#f0f0f0"/>
<rect x="1171.5" y="659.5" width="12" height="12" fill="#fff" stroke="#c6c6c6" stroke-width="1"/>
<path d="M1176,662 L1180,665 L1176,668 Z" fill="#222"/>
<ellipse cx="903.35" cy="458.65" rx="180.15" ry="147.35" fill="#4472c4" stroke="#172f5a" stroke-width="1.3"/>
<ellipse cx="845.64" cy="414.58" rx="18.77" ry="15.35" fill="#3b63ac" stroke="#172f5a" stroke-width="1.3"/>
<ellipse cx="961.06" cy="414.58" rx="18.77" ry="15.35" fill="#3b63ac" stroke="#172f5a" stroke-width="1.3"/>
<path d="M806.10,522.91 Q903.35,577.76 1000.76,522.91" fill="none" stroke="#142a52" stroke-width="1.5"/>
<rect x="723.2" y="311.3" width="360.29999999999995" height="294.7" fill="none" stroke="#8a8a8a" stroke-width="1"/>
<circle cx="723.2" cy="311.3" r="4.2" fill="#fff" stroke="#5c5c5c" stroke-width="1.2"/>
<circle cx="1083.5" cy="311.3" r="4.2" fill="#fff" stroke="#5c5c5c" stroke-width="1.2"/>
<circle cx="723.2" cy="458.65" r="4.2" fill="#fff" stroke="#5c5c5c" stroke-width="1.2"/>
<circle cx="1083.5" cy="458.65" r="4.2" fill="#fff" stroke="#5c5c5c" stroke-width="1.2"/>
<circle cx="723.2" cy="606" r="4.2" fill="#fff" stroke="#5c5c5c" stroke-width="1.2"/>
<circle cx="903.35" cy="606" r="4.2" fill="#fff" stroke="#5c5c5c" stroke-width="1.2"/>
<circle cx="1083.5" cy="606" r="4.2" fill="#fff" stroke="#5c5c5c" stroke-width="1.2"/>
<circle cx="903.35" cy="311.3" r="4.2" fill="#fff" stroke="#5c5c5c" stroke-width="1.2"/>
<circle cx="903.35" cy="550.34" r="4" fill="#ffe100" stroke="#4a4a4a" stroke-width="1.1"/>
<path d="M776.3,102.6 H801.1 V110 H784.4 V122.3 C786.3,121.2 789,120.8 791.5,120.8 C799.5,120.8 802.8,125.5 802.8,133 V151 C802.8,158.8 798.5,162.2 789,162.2 C779.8,162.2 775.3,158.8 775.3,151 V142.8 H784.4 V149.3 C784.4,152.3 786.3,153.9 789.2,153.9 C792.2,153.9 794.1,152.3 794.1,149.3 V134 C794.1,131 792.2,129.4 789.2,129.4 C786.3,129.4 784.4,131 784.4,134 V136.7 H776.3 Z" fill="#fe0000"/>
<g filter="url(#sh)">
<rect x="818.5" y="50" width="189.3" height="370.4" fill="#fff" stroke="#bdbdbd" stroke-width="1" rx="2"/>
</g>
<rect x="823.5" y="54.5" width="180" height="19" fill="#fff" stroke="#c6c6c6" stroke-width="1"/>
<text x="828.7" y="66.3" font-size="9" fill="#777" textLength="69.3" lengthAdjust="spacingAndGlyphs">Search the menus</text>
<rect x="821" y="75.8" width="186" height="24" fill="#e6f1ea"/>
<rect x="820.9" y="75.8" width="186" height="24.1" fill="none" stroke="#ff0000" stroke-width="4"/>
<path d="M824,82 L832,91 M832,82 L826,89" fill="none" stroke="#555" stroke-width="1"/>
<circle cx="826" cy="92.5" r="2" fill="none" stroke="#2e75b6" stroke-width="1"/>
<circle cx="832" cy="92.5" r="2" fill="none" stroke="#2e75b6" stroke-width="1"/>
<text x="845.8" y="93" font-size="11" fill="#262626" textLength="16" lengthAdjust="spacingAndGlyphs">Cut</text>
<line x1="858.94" y1="94.2" x2="861.8" y2="94.2" stroke="#262626" stroke-width="0.75"/>
<path d="M823.5,111.5 V102.5 H828.5 L830.5,104.5" fill="#fff" stroke="#777" stroke-width="0.8"/>
<line x1="824.5" y1="104.5" x2="827.5" y2="104.5" stroke="#5b8fd0" stroke-width="0.7"/>
<line x1="824.5" y1="106.5" x2="827.5" y2="106.5" stroke="#5b8fd0" stroke-width="0.7"/>
<line x1="824.5" y1="108.5" x2="827.5" y2="108.5" stroke="#5b8fd0" stroke-width="0.7"/>
<path d="M828,106 H832.5 L835,108.5 V114.5 H828 Z" fill="#fff" stroke="#777" stroke-width="0.8"/>
<line x1="829.5" y1="108.5" x2="833.5" y2="108.5" stroke="#5b8fd0" stroke-width="0.7"/>
<line x1="829.5" y1="110.5" x2="833.5" y2="110.5" stroke="#5b8fd0" stroke-width="0.7"/>
<line x1="829.5" y1="112.5" x2="833.5" y2="112.5" stroke="#5b8fd0" stroke-width="0.7"/>
<text x="845.8" y="113.4" font-size="11" fill="#262626" textLength="23" lengthAdjust="spacingAndGlyphs">Copy</text>
<line x1="845.8" y1="114.6" x2="852.92" y2="114.6" stroke="#262626" stroke-width="0.75"/>
<rect x="839.5" y="118.8" width="166" height="19.5" fill="#e9e9e9"/>
<rect x="823" y="122.5" width="9.5" height="12.5" fill="#e6bd76"/>
<path d="M825,123 H830.5 L829.5,121.5 H826 Z" fill="#888"/>
<path d="M830,127.5 H833.5 L836,130 V135.5 H830 Z" fill="#fff" stroke="#666" stroke-width="0.8"/>
<text x="847" y="133" font-size="11" fill="#444" font-weight="bold" textLength="68" lengthAdjust="spacingAndGlyphs">Paste Options:</text>
<rect x="846" y="145.5" width="10.5" height="13.5" fill="#e6bd76"/>
<path d="M848,146 H854.5 L853.5,144 H849 Z" fill="#888"/>
<path d="M853,151 H857.5 L860.5,154 V159.5 H853 Z" fill="#fff" stroke="#666" stroke-width="0.8"/>
<line x1="845.6" y1="164.5" x2="1005" y2="164.5" stroke="#e1e1e1" stroke-width="1"/>
<rect x="822.5" y="170.5" width="13" height="11" fill="#e8e8e8" stroke="#777" stroke-width="0.8"/>
<text x="824" y="176" font-size="5" fill="#2e75b6">A</text>
<line x1="824" y1="177" x2="834" y2="177" stroke="#aaa" stroke-width="0.7"/>
<line x1="824" y1="179" x2="834" y2="179" stroke="#aaa" stroke-width="0.7"/>
<text x="845.8" y="181.3" font-size="11" fill="#262626" textLength="40.4" lengthAdjust="spacingAndGlyphs">Edit Text</text>
<line x1="877.97" y1="182.5" x2="883.26" y2="182.5" stroke="#262626" stroke-width="0.75"/>
<rect x="823" y="191" width="1.6" height="1.6" fill="#2e5fa8"/>
<rect x="829" y="190" width="1.6" height="1.6" fill="#2e5fa8"/>
<rect x="835" y="191" width="1.6" height="1.6" fill="#2e5fa8"/>
<rect x="823" y="196" width="1.6" height="1.6" fill="#2e5fa8"/>
<rect x="829" y="197" width="1.6" height="1.6" fill="#2e5fa8"/>
<rect x="835" y="201" width="1.6" height="1.6" fill="#2e5fa8"/>
<rect x="823" y="201" width="1.6" height="1.6" fill="#2e5fa8"/>
<rect x="829" y="201" width="1.6" height="1.6" fill="#2e5fa8"/>
<line x1="824" y1="201.5" x2="835" y2="201.5" stroke="#888" stroke-width="0.6"/>
<line x1="824" y1="192" x2="835" y2="200" stroke="#888" stroke-width="0.6"/>
<text x="845.8" y="201.2" font-size="11" fill="#262626" textLength="48" lengthAdjust="spacingAndGlyphs">Edit Points</text>
<line x1="845.8" y1="202.4" x2="852.5" y2="202.4" stroke="#262626" stroke-width="0.75"/>
<line x1="845.6" y1="207.6" x2="1005" y2="207.6" stroke="#e1e1e1" stroke-width="1"/>
<rect x="823.5" y="213.5" width="12" height="11" fill="none" stroke="#c0c0c0" stroke-width="0.8" stroke-dasharray="2,1.5"/>
<rect x="826" y="216" width="7" height="6" fill="none" stroke="#c8c8c8" stroke-width="0.8"/>
<text x="845.8" y="224" font-size="11" fill="#a6a6a6" textLength="27.4" lengthAdjust="spacingAndGlyphs">Group</text>
<line x1="845.8" y1="225.2" x2="853.47" y2="225.2" stroke="#a6a6a6" stroke-width="0.75"/>
<path d="M995,216.5 L999,220 L995,223.5 Z" fill="#b0b0b0"/>
<rect x="825" y="233.5" width="8" height="7" fill="#e8c170"/>
<path d="M823,235 L823,232 L826,232 M835,240 L835,243 L832,243" fill="none" stroke="#555" stroke-width="0.8"/>
<text x="845.8" y="244.4" font-size="11" fill="#262626" textLength="62.2" lengthAdjust="spacingAndGlyphs">Bring to Front</text>
<line x1="890.31" y1="245.6" x2="893.73" y2="245.6" stroke="#262626" stroke-width="0.75"/>
<path d="M995,236.5 L999,240 L995,243.5 Z" fill="#111"/>
<line x1="987" y1="232" x2="987" y2="248" stroke="#ececec" stroke-width="1"/>
<rect x="823.5" y="252.5" width="6" height="6" fill="#fff" stroke="#555" stroke-width="0.8"/>
<rect x="826" y="256" width="7" height="6" fill="#e8c170"/>
<rect x="830.5" y="259.5" width="6" height="6" fill="#fff" stroke="#555" stroke-width="0.8"/>
<text x="845.8" y="265" font-size="11" fill="#262626" textLength="59.2" lengthAdjust="spacingAndGlyphs">Send to Back</text>
<line x1="900.02" y1="266.2" x2="905.0" y2="266.2" stroke="#262626" stroke-width="0.75"/>
<path d="M995,257 L999,260.5 L995,264 Z" fill="#111"/>
<line x1="987" y1="252" x2="987" y2="268" stroke="#ececec" stroke-width="1"/>
<line x1="845.6" y1="271.1" x2="1005" y2="271.1" stroke="#e1e1e1" stroke-width="1"/>
<circle cx="828" cy="280" r="5" fill="none" stroke="#666" stroke-width="0.9"/>
<line x1="823" y1="280" x2="833" y2="280" stroke="#666" stroke-width="0.6"/>
<ellipse cx="828" cy="280" rx="2.2" ry="5" fill="none" stroke="#666" stroke-width="0.6"/>
<path d="M826,287 C824,287 824,284 826,284 L830,284 M830,285.5 L834,285.5 C836,285.5 836,288.5 834,288.5 L830,288.5" fill="none" stroke="#2e75b6" stroke-width="1.4"/>
<text x="845.8" y="287.5" font-size="11" fill="#262626" textLength="18" lengthAdjust="spacingAndGlyphs">Link</text>
<line x1="851.26" y1="288.7" x2="853.44" y2="288.7" stroke="#262626" stroke-width="0.75"/>
<circle cx="825" cy="298" r="2.8" fill="none" stroke="#bbb" stroke-width="0.8"/>
<rect x="823" y="302" width="12" height="6" fill="#d9d9d9"/>
<text x="845.8" y="308.2" font-size="11" fill="#a6a6a6" textLength="44.8" lengthAdjust="spacingAndGlyphs">Open Link</text>
<line x1="845.8" y1="309.4" x2="853.44" y2="309.4" stroke="#a6a6a6" stroke-width="0.75"/>
<line x1="845.6" y1="313.6" x2="1005" y2="313.6" stroke="#e1e1e1" stroke-width="1"/>
<text x="845.8" y="330.6" font-size="11" fill="#262626" textLength="66.4" lengthAdjust="spacingAndGlyphs">Assign Macro...</text>
<line x1="869.36" y1="331.8" x2="874.72" y2="331.8" stroke="#262626" stroke-width="0.75"/>
<line x1="845.6" y1="335.6" x2="1005" y2="335.6" stroke="#e1e1e1" stroke-width="1"/>
<rect x="822.5" y="342.5" width="12" height="10" fill="#fff" stroke="#777" stroke-width="0.8"/>
<path d="M823,352 L827,347 L830,350 L832,348 L834.5,352 Z" fill="#2e75b6"/>
<rect x="825.5" y="349.5" width="11" height="5" fill="#e5e5e5" stroke="#888" stroke-width="0.6"/>
<text x="845.8" y="352.4" font-size="11" fill="#262626" textLength="64.8" lengthAdjust="spacingAndGlyphs">View Alt Text...</text>
<line x1="870.12" y1="353.6" x2="876.26" y2="353.6" stroke="#262626" stroke-width="0.75"/>
<text x="845.8" y="373.3" font-size="11" fill="#262626" textLength="93.2" lengthAdjust="spacingAndGlyphs">Set as Default Shape</text>
<line x1="876.5" y1="374.5" x2="883.62" y2="374.5" stroke="#262626" stroke-width="0.75"/>
<path d="M823.5,383 L823.5,396 M821.5,385 L823.5,383 L825.5,385 M821.5,394 L823.5,396 L825.5,394" fill="none" stroke="#2e75b6" stroke-width="0.9"/>
<rect x="822.5" y="387.5" width="2.5" height="3" fill="none" stroke="#666" stroke-width="0.6"/>
<rect x="829.5" y="382.5" width="5" height="13" fill="#fff" stroke="#777" stroke-width="0.8"/>
<text x="845.8" y="393.4" font-size="11" fill="#262626" textLength="92.2" lengthAdjust="spacingAndGlyphs">Size and Properties...</text>
<line x1="854.38" y1="394.6" x2="859.2" y2="394.6" stroke="#262626" stroke-width="0.75"/>
<path d="M822.5,407 L826.5,403.5 L830.5,408 L826.5,411.5 Z" fill="#fff" stroke="#555" stroke-width="0.9"/>
<path d="M824.5,405 L824.5,403 C824.5,401.5 827.5,401.5 827.5,403 L827.5,404.5" fill="none" stroke="#555" stroke-width="0.8"/>
<path d="M830.5,405 C832,406.5 832,408 831,409" fill="none" stroke="#2e75b6" stroke-width="1.1"/>
<path d="M836,405.5 L831.5,411.5 L830.5,410.5 Z" fill="#444"/>
<path d="M831,411 L826.5,415.5 L829.5,411 Z" fill="#2e75b6" stroke="#2e75b6" stroke-width="1"/>
<text x="845.8" y="414" font-size="11" fill="#262626" textLength="68.5" lengthAdjust="spacingAndGlyphs">Format Shape...</text>
<line x1="851.64" y1="415.2" x2="856.95" y2="415.2" stroke="#262626" stroke-width="0.75"/>
<g filter="url(#sh)">
<rect x="818.5" y="434.5" width="108.5" height="53" fill="#fff" stroke="#d0d0d0" stroke-width="0.8" rx="3"/>
</g>
<path d="M833,457 L833,444 C833,443 834,442.5 835,442.5 L844,442.5 C845,442.5 846,443 846,444 L846,448" fill="none" stroke="#555" stroke-width="0.9"/>
<line x1="833" y1="457" x2="838" y2="457" stroke="#555" stroke-width="0.9"/>
<path d="M838,458 L842,452 L844.5,454 Z" fill="#2e75b6"/>
<path d="M843,451.5 L848,446 L849,447 L845,453 Z" fill="#555"/>
<path d="M850.5,449 L852.25,450.75 L854.0,449" fill="none" stroke="#444" stroke-width="1.25"/>
<path d="M867.5,447.5 L872,443 L877,448 L872.5,452.5 Z" fill="none" stroke="#444" stroke-width="1"/>
<line x1="872" y1="441.5" x2="872" y2="446" stroke="#444" stroke-width="0.8"/>
<path d="M877,448 C879.5,450 880,452 878.5,453.5" fill="none" stroke="#2e75b6" stroke-width="1.3"/>
<rect x="862" y="455" width="21" height="4.8" fill="#ed7d31"/>
<path d="M884,449 L885.75,450.75 L887.5,449" fill="none" stroke="#444" stroke-width="1.25"/>
<path d="M898,453 L898,442.5 L909,442.5" fill="none" stroke="#555" stroke-width="0.9"/>
<line x1="898" y1="453" x2="902" y2="453" stroke="#555" stroke-width="0.9"/>
<path d="M902,453 L912.5,442 L914,443.5 L903.5,454.5 Z" fill="#2e75b6"/>
<rect x="896" y="455" width="20.7" height="4.8" fill="#4472c4"/>
<path d="M918,449 L919.75,450.75 L921.5,449" fill="none" stroke="#444" stroke-width="1.25"/>
<text x="829.4" y="475.5" font-size="9" fill="#333" textLength="17.8" lengthAdjust="spacingAndGlyphs">Style</text>
<text x="866.9" y="475.5" font-size="9" fill="#333" textLength="10.3" lengthAdjust="spacingAndGlyphs">Fill</text>
<text x="893" y="475.5" font-size="9" fill="#333" textLength="27.2" lengthAdjust="spacingAndGlyphs">Outline</text>
<path d="M0,0 H1200 V675 H0 Z M4,4 V671 H1196 V4 Z" fill="#217346" fill-rule="evenodd"/>
<rect x="0" y="0" width="1200" height="1" fill="#3a8565"/>
</svg></body></html>
